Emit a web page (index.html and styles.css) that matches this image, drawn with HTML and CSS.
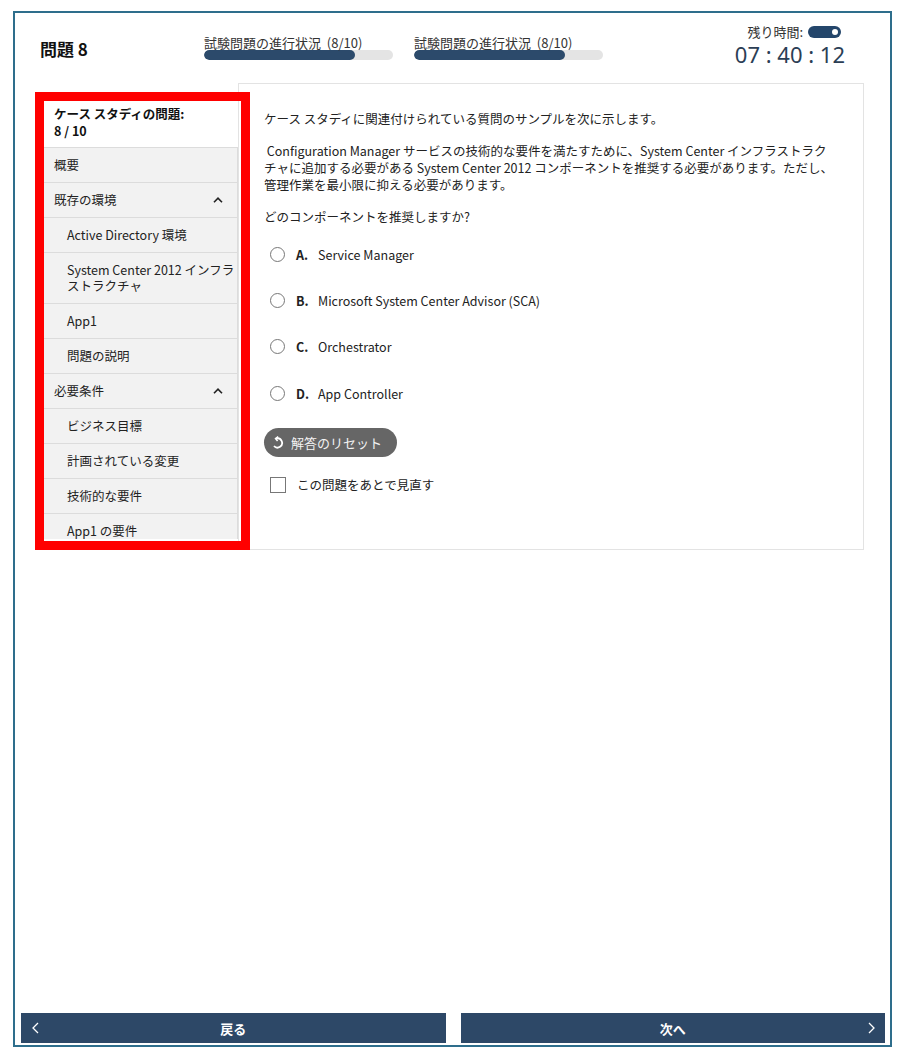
FILE: index.html
```html
<!DOCTYPE html>
<html lang="ja">
<head>
    <meta charset="UTF-8">
    <meta name="viewport" content="width=device-width, initial-scale=1.0">
    <title>問題 8</title>
    <link rel="stylesheet" href="styles.css">
</head>
<body>
    <div class="frame">
        <div class="topbar">
            <div class="qnum">問題 8</div>
            <div class="progress">
                <div class="progress-label">試験問題の進行状況&nbsp; (8/10)</div>
                <div class="track"><div class="fill" style="width: 80%"></div></div>
            </div>
            <div class="progress">
                <div class="progress-label">試験問題の進行状況&nbsp; (8/10)</div>
                <div class="track"><div class="fill" style="width: 80%"></div></div>
            </div>
            <div class="timer">
                <div class="timer-label">残り時間: <span class="toggle"><span class="knob"></span></span></div>
                <div class="timer-value">07 : 40 : 12</div>
            </div>
        </div>

        <div class="content">
            <div class="sidebar">
                <div class="side-head">ケース スタディの問題:<br>8 / 10</div>
                <div class="side-item">概要</div>
                <div class="side-item group">既存の環境
                    <svg class="chev" width="10" height="6" viewBox="0 0 10 6"><polyline points="1,5.2 5,1.2 9,5.2" fill="none" stroke="#222" stroke-width="1.6"/></svg>
                </div>
                <div class="side-item sub">Active Directory 環境</div>
                <div class="side-item sub">System Center 2012 インフラストラクチャ</div>
                <div class="side-item sub">App1</div>
                <div class="side-item sub">問題の説明</div>
                <div class="side-item group">必要条件
                    <svg class="chev" width="10" height="6" viewBox="0 0 10 6"><polyline points="1,5.2 5,1.2 9,5.2" fill="none" stroke="#222" stroke-width="1.6"/></svg>
                </div>
                <div class="side-item sub">ビジネス目標</div>
                <div class="side-item sub">計画されている変更</div>
                <div class="side-item sub">技術的な要件</div>
                <div class="side-item sub">App1 の要件</div>
            </div>

            <div class="panel">
                <p>ケース スタディに関連付けられている質問のサンプルを次に示します。</p>
                <p>&nbsp;Configuration Manager サービスの技術的な要件を満たすために、System Center インフラストラク<br>チャに追加する必要がある System Center 2012 コンポーネントを推奨する必要があります。ただし、<br>管理作業を最小限に抑える必要があります。</p>
                <p>どのコンポーネントを推奨しますか?</p>
                <div class="options">
                    <div class="option"><span class="radio"></span><span class="letter">A.</span>Service Manager</div>
                    <div class="option"><span class="radio"></span><span class="letter">B.</span>Microsoft System Center Advisor (SCA)</div>
                    <div class="option"><span class="radio"></span><span class="letter">C.</span>Orchestrator</div>
                    <div class="option"><span class="radio"></span><span class="letter">D.</span>App Controller</div>
                </div>
                <button class="reset">
                    <svg width="13" height="13" viewBox="0 0 13 13"><path d="M4 2.6 A4.6 4.6 0 1 1 2 10" fill="none" stroke="#fff" stroke-width="1.8"/><polyline points="6.2,0.6 3.6,2.6 5.6,5" fill="none" stroke="#fff" stroke-width="1.6"/></svg>
                    解答のリセット
                </button>
                <label class="review"><span class="checkbox"></span>この問題をあとで見直す</label>
            </div>
        </div>

        <div class="footer">
            <button class="nav">
                <svg class="nav-chev left" width="7" height="12" viewBox="0 0 7 12"><polyline points="6,1 1,6 6,11" fill="none" stroke="#fff" stroke-width="1.3"/></svg>
                戻る
            </button>
            <button class="nav">
                次へ
                <svg class="nav-chev right" width="7" height="12" viewBox="0 0 7 12"><polyline points="1,1 6,6 1,11" fill="none" stroke="#fff" stroke-width="1.3"/></svg>
            </button>
        </div>
    </div>
</body>
</html>
```

FILE: styles.css
```css
body {
    margin: 11px 7px 6px 13px;
    font-family: 'Noto Sans CJK JP', 'Noto Sans', sans-serif;
    font-size: 12.5px;
    color: #222;
    background: white;
}
.frame {
    height: 1036px;
    box-sizing: border-box;
    border: 2px solid #2e6e8c;
    display: flex;
    flex-direction: column;
}
.topbar {
    height: 70px;
    display: flex;
    align-items: center;
    padding: 0 45px 0 25px;
}
.qnum {
    width: 164px;
    font-size: 17px;
    font-weight: bold;
    color: #111;
}
.progress {
    width: 189px;
    margin-right: 21px;
}
.progress-label {
    font-size: 13px;
    line-height: 14px;
    color: #333;
    white-space: nowrap;
}
.track {
    height: 10px;
    border-radius: 5px;
    background: #e4e4e4;
    overflow: hidden;
}
.fill {
    height: 100%;
    border-radius: 5px;
    background: #2c4a6b;
}
.timer {
    margin-left: auto;
    text-align: right;
    margin-top: -4px;
}
.timer-label {
    display: flex;
    align-items: center;
    justify-content: flex-end;
    gap: 5px;
    margin-right: 4px;
    font-size: 13px;
    line-height: 16px;
    color: #333;
}
.toggle {
    width: 33px;
    height: 12px;
    border-radius: 6px;
    background: #24466b;
    display: flex;
    align-items: center;
    justify-content: flex-end;
    padding-right: 3px;
    box-sizing: border-box;
}
.knob {
    width: 6px;
    height: 6px;
    border-radius: 50%;
    background: white;
}
.timer-value {
    font-family: 'Noto Sans', sans-serif;
    font-size: 22px;
    line-height: 28px;
    color: #2b3e55;
}
.content {
    display: flex;
    align-items: flex-start;
    padding-left: 20px;
    height: 467px;
}
.sidebar {
    position: relative;
    width: 203px;
    height: 458px;
    margin-top: 9px;
    padding: 8px 0 0 9px;
    box-sizing: border-box;
}
.sidebar::after {
    content: '';
    position: absolute;
    top: 0;
    left: 0;
    right: -12px;
    bottom: 0;
    border: 9px solid #ff0000;
    z-index: 2;
}
.side-head {
    background: white;
    font-weight: bold;
    line-height: 17px;
    padding: 5px 6px 8px 10px;
    color: #111;
}
.side-item {
    display: flex;
    align-items: center;
    justify-content: space-between;
    line-height: 16px;
    padding: 9px 14px 9px 10px;
    background: #f2f2f2;
    border-top: 1px solid #dcdcdc;
    border-right: 1px solid #dcdcdc;
}
.side-item.sub {
    padding-left: 23px;
    padding-right: 2px;
}
.side-item:last-child {
    height: 16px;
    padding-bottom: 0;
    overflow: hidden;
}
.chev {
    flex-shrink: 0;
}
.panel {
    width: 626px;
    height: 467px;
    box-sizing: border-box;
    border: 1px solid #e3e3e3;
    padding: 26px 16px 0 25px;
    background: white;
}
.panel p {
    margin: 0 0 15px;
    line-height: 17px;
    color: #222;
}
.options {
    margin-top: -9px;
}
.option {
    height: 46.3px;
    display: flex;
    align-items: center;
    color: #222;
}
.radio {
    width: 13px;
    height: 13px;
    border: 1.6px solid #777;
    border-radius: 50%;
    margin: 0 11px 0 6px;
}
.letter {
    width: 22px;
    font-weight: bold;
}
.reset {
    margin-top: 12px;
    height: 29px;
    width: 133px;
    border: none;
    border-radius: 14.5px;
    background: #666666;
    color: #f2f2f2;
    font-family: inherit;
    font-size: 13px;
    display: flex;
    align-items: center;
    gap: 6px;
    padding: 0 0 0 8px;
}
.review {
    display: flex;
    align-items: center;
    margin-top: 19px;
    line-height: 17px;
    color: #222;
}
.checkbox {
    width: 14px;
    height: 14px;
    border: 1.6px solid #777;
    margin: 0 11px 0 6px;
}
.footer {
    margin-top: auto;
    display: flex;
    gap: 15px;
    padding: 0 5px 2px 6px;
}
.nav {
    flex: 1;
    height: 30px;
    border: none;
    background: #2d4867;
    color: white;
    font-family: inherit;
    font-size: 13px;
    font-weight: bold;
    position: relative;
}
.nav-chev {
    position: absolute;
    top: 9px;
}
.nav-chev.left {
    left: 11px;
}
.nav-chev.right {
    right: 10px;
}
```
